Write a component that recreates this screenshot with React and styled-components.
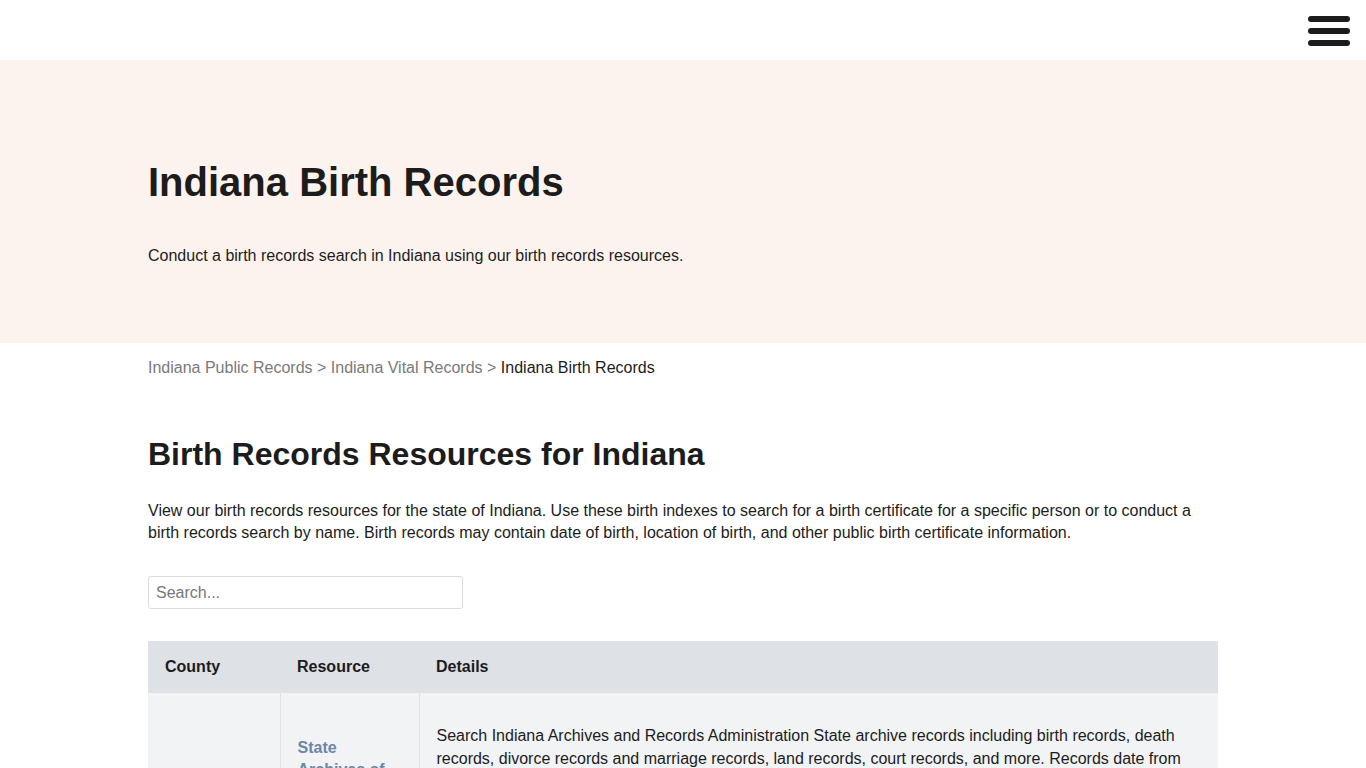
import React from 'react';
import styled, { createGlobalStyle } from 'styled-components';

const GlobalStyle = createGlobalStyle`
  * { box-sizing: border-box; }
  body {
    margin: 0;
    font-family: 'Liberation Sans', Arial, sans-serif;
    color: #1c1c1c;
    background: #fff;
  }
`;

const rows = [
  {
    county: '',
    resource: 'State Archives of Indiana',
    details:
      'Search Indiana Archives and Records Administration State archive records including birth records, death records, divorce records and marriage records, land records, court records, and more. Records date from the early 1700s to the present and include historical county birth indexes, delayed birth registrations, and other vital records held by the State of Indiana for public research and genealogy requests.',
  },
];

const App = () => {
  return (
    <>
      <GlobalStyle />
      <TopBar>
        <MenuButton aria-label="menu">
          <Bar />
          <Bar />
          <Bar />
        </MenuButton>
      </TopBar>
      <Hero>
        <Wrap>
          <Title>Indiana Birth Records</Title>
          <Lead>Conduct a birth records search in Indiana using our birth records resources.</Lead>
        </Wrap>
      </Hero>
      <Wrap>
        <Crumbs>
          <CrumbLink href="#">Indiana Public Records</CrumbLink> &gt;{' '}
          <CrumbLink href="#">Indiana Vital Records</CrumbLink> &gt; <Current>Indiana Birth Records</Current>
        </Crumbs>
        <Heading>Birth Records Resources for Indiana</Heading>
        <Intro>
          View our birth records resources for the state of Indiana. Use these birth indexes to search for a birth
          certificate for a specific person or to conduct a birth records search by name. Birth records may contain
          date of birth, location of birth, and other public birth certificate information.
        </Intro>
        <SearchInput placeholder="Search..." />
        <Table>
          <thead>
            <tr>
              <Th $w={132}>County</Th>
              <Th $w={139}>Resource</Th>
              <Th>Details</Th>
            </tr>
          </thead>
          <tbody>
            {rows.map((r) => (
              <tr key={r.resource}>
                <Td>{r.county}</Td>
                <Td>
                  <ResLink href="#">{r.resource}</ResLink>
                </Td>
                <Td $details>{r.details}</Td>
              </tr>
            ))}
          </tbody>
        </Table>
      </Wrap>
    </>
  );
};

export default App;

const TopBar = styled.header`
  height: 60px;
  display: flex;
  justify-content: flex-end;
  align-items: center;
  padding-right: 16px;
  background: #fff;
`;
const MenuButton = styled.button`
  width: 42px;
  display: flex;
  flex-direction: column;
  gap: 6px;
  padding: 0;
  border: 0;
  background: none;
  cursor: pointer;
  margin-top: 2px;
`;
const Bar = styled.span`
  display: block;
  height: 6px;
  border-radius: 3px;
  background: #1c1c1c;
`;
const Hero = styled.section`
  background: #fdf3ee;
  padding: 98px 0 75px;
`;
const Wrap = styled.div`
  width: 1070px;
  margin: 0 auto;
`;
const Title = styled.h1`
  margin: 0;
  font-size: 40px;
  line-height: 48px;
  font-weight: 700;
  color: #1c1c1c;
`;
const Lead = styled.p`
  margin: 38px 0 0;
  font-size: 16px;
  line-height: 24px;
  color: #1c1c1c;
`;
const Crumbs = styled.nav`
  margin-top: 13px;
  font-size: 16px;
  line-height: 24px;
  color: #7a7a7a;
`;
const CrumbLink = styled.a`
  color: #7a7a7a;
  text-decoration: none;
`;
const Current = styled.span`
  color: #1c1c1c;
`;
const Heading = styled.h2`
  margin: 55px 0 0;
  font-size: 32px;
  line-height: 38px;
  font-weight: 700;
  color: #1c1c1c;
`;
const Intro = styled.p`
  margin: 27px 0 0;
  font-size: 16px;
  line-height: 22px;
  color: #1c1c1c;
`;
const SearchInput = styled.input`
  display: block;
  margin-top: 32px;
  width: 315px;
  height: 33px;
  padding: 0 7px;
  border: 1px solid #dcdcdc;
  border-radius: 3px;
  font-family: inherit;
  font-size: 16px;
  color: #333;
  &::placeholder {
    color: #777;
  }
`;
const Table = styled.table`
  margin-top: 32px;
  width: 100%;
  border-collapse: collapse;
  font-size: 16px;
`;
const Th = styled.th`
  width: ${({ $w }) => ($w ? `${$w}px` : 'auto')};
  height: 52px;
  padding: 0 17px;
  background: #dee1e6;
  text-align: left;
  font-weight: 700;
  color: #1c1c1c;
`;
const Td = styled.td`
  background: #f1f3f5;
  padding: ${({ $details }) => ($details ? '31px 17px' : '16px 17px')};
  border-right: 1px solid #dfe2e6;
  vertical-align: middle;
  line-height: ${({ $details }) => ($details ? '23px' : '22px')};
  color: #1c1c1c;
  &:last-child {
    border-right: 0;
  }
`;
const ResLink = styled.a`
  color: #6b87a8;
  font-weight: 700;
  text-decoration: none;
`;
